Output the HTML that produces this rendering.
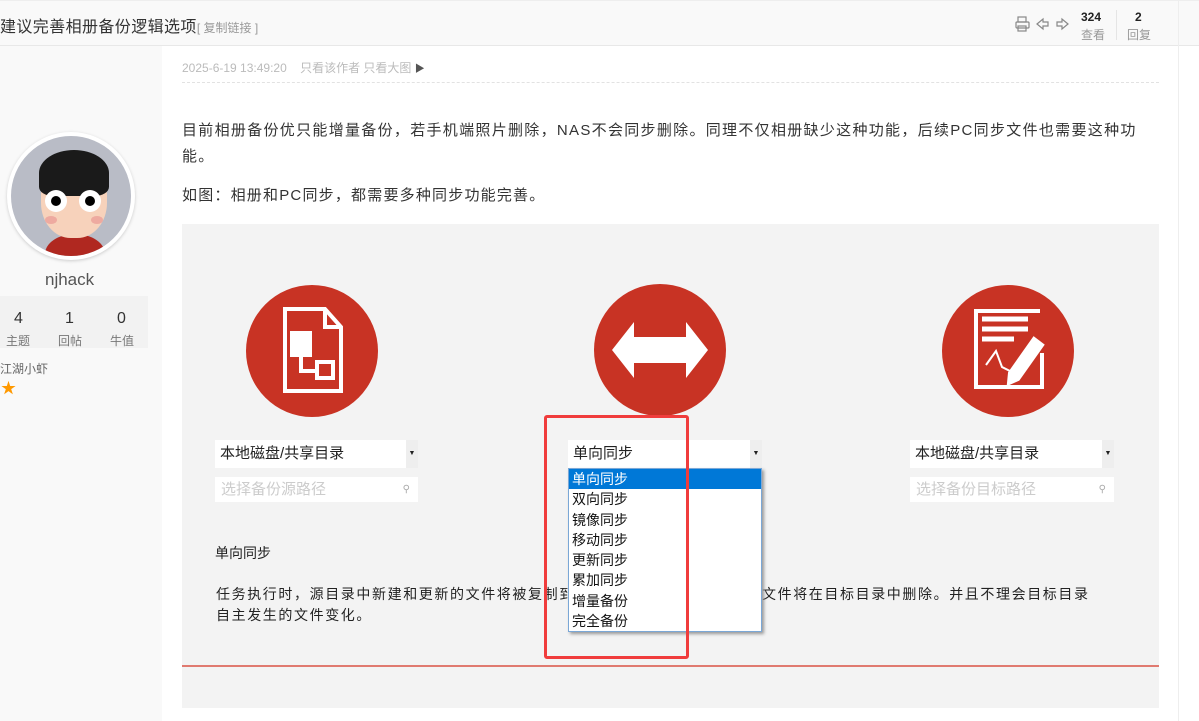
<!DOCTYPE html>
<html><head><meta charset="utf-8"><style>
*{margin:0;padding:0;box-sizing:border-box}
body{width:1199px;height:721px;overflow:hidden;background:#fff;font-family:"Liberation Sans","Noto Sans CJK SC",sans-serif;position:relative;color:#333}
.a{position:absolute;white-space:nowrap}
.sel{position:absolute;background:#fff;font-size:15px;color:#222;padding:0 5px;line-height:28px;height:28px}
.sel .ar{position:absolute;right:0;top:0;width:12px;height:28px;background:#eee;font-size:7px;text-align:center;line-height:28px}
.inp{position:absolute;background:#fff;height:25px;font-size:15px;color:#ccc;padding:0 6px;line-height:25px}
.circ{position:absolute;width:132px;height:132px;border-radius:50%;background:#c83324}
</style></head><body>
<div class="a" style="left:0;top:0;width:1199px;height:46px;background:#f9f9f9;border-bottom:1px solid #e8e8e8;border-top:1px solid #eee"></div>
<div class="a" style="left:0;top:13px;font-size:16px;color:#333;letter-spacing:0.4px">建议完善相册备份逻辑选项<span style="font-size:12px;color:#999;letter-spacing:0">[ 复制链接 ]</span></div>
<svg class="a" style="left:1015px;top:16px" width="60" height="16" viewBox="0 0 60 16" fill="none" stroke="#888" stroke-width="1.2"><rect x="3" y="1" width="8" height="5"/><rect x="1" y="6" width="13" height="6" rx="1"/><rect x="3" y="10" width="8" height="5"/><path d="M22 8l6-5v3h5v4h-5v3z"/><path d="M53 8l-6-5v3h-5v4h5v3z"/></svg>
<div class="a" style="left:1081px;top:10px;font-size:12px;font-weight:bold;color:#222">324</div>
<div class="a" style="left:1081px;top:26px;font-size:12px;color:#999">查看</div>
<div class="a" style="left:1116px;top:10px;width:1px;height:30px;background:#e5e5e5"></div>
<div class="a" style="left:1135px;top:10px;font-size:12px;font-weight:bold;color:#222">2</div>
<div class="a" style="left:1127px;top:26px;font-size:12px;color:#999">回复</div>
<div class="a" style="left:1178px;top:0;width:1px;height:721px;background:#eee"></div>
<div class="a" style="left:0;top:46px;width:162px;height:675px;background:#f9f9f9"></div>
<div class="a" style="left:7px;top:132px;width:128px;height:128px;border-radius:50%;background:#fff;box-shadow:0 1px 3px #ccc"></div>
<div class="a" style="left:11px;top:136px;width:120px;height:120px;border-radius:50%;background:#b9bcc6;overflow:hidden">
<div class="a" style="left:34px;top:98px;width:60px;height:40px;border-radius:50%;background:#b02820"></div>
<div class="a" style="left:30px;top:24px;width:66px;height:78px;border-radius:45%;background:#f7d2bb"></div>
<div class="a" style="left:28px;top:14px;width:70px;height:46px;border-radius:50% 50% 20% 20%;background:#1a1a1a"></div>
<div class="a" style="left:34px;top:54px;width:22px;height:22px;border-radius:50%;background:#fff"></div>
<div class="a" style="left:40px;top:60px;width:10px;height:10px;border-radius:50%;background:#000"></div>
<div class="a" style="left:68px;top:54px;width:22px;height:22px;border-radius:50%;background:#fff"></div>
<div class="a" style="left:74px;top:60px;width:10px;height:10px;border-radius:50%;background:#000"></div>
<div class="a" style="left:34px;top:80px;width:12px;height:8px;border-radius:50%;background:#eeaaa0"></div>
<div class="a" style="left:80px;top:80px;width:12px;height:8px;border-radius:50%;background:#eeaaa0"></div>
</div>
<div class="a" style="left:45px;top:270px;font-size:17px;color:#555">njhack</div>
<div class="a" style="left:0;top:296px;width:148px;height:52px;background:#f2f2f2"></div>
<div class="a" style="left:14px;top:310px;font-size:16px;color:#333">4</div>
<div class="a" style="left:65px;top:310px;font-size:16px;color:#333">1</div>
<div class="a" style="left:117px;top:310px;font-size:16px;color:#333">0</div>
<div class="a" style="left:6px;top:332px;font-size:12px;color:#777">主题</div>
<div class="a" style="left:58px;top:332px;font-size:12px;color:#777">回帖</div>
<div class="a" style="left:110px;top:332px;font-size:12px;color:#777">牛值</div>
<div class="a" style="left:0;top:360px;font-size:12px;color:#666">江湖小虾</div>
<div class="a" style="left:1px;top:377px;font-size:15px;color:#f90">★</div>
<div class="a" style="left:182px;top:59px;font-size:12px;color:#bbb">2025-6-19 13:49:20 &nbsp;&nbsp; 只看该作者 只看大图 <span style="color:#555;font-size:10px">▶</span></div>
<div class="a" style="left:182px;top:82px;width:977px;border-top:1px dashed #e2e2e2"></div>
<div class="a" style="left:182px;top:118px;font-size:15px;color:#333;line-height:26px;white-space:normal;width:975px;letter-spacing:1.3px">目前相册备份优只能增量备份，若手机端照片删除，NAS不会同步删除。同理不仅相册缺少这种功能，后续PC同步文件也需要这种功能。</div>
<div class="a" style="left:182px;top:184px;font-size:15px;color:#333;letter-spacing:1.2px">如图：相册和PC同步，都需要多种同步功能完善。</div>
<div class="a" style="left:182px;top:224px;width:977px;height:484px;background:#f3f3f3"></div>
<div class="a" style="left:182px;top:665px;width:977px;height:2px;background:#e07a70"></div>
<div class="circ" style="left:246px;top:285px"></div>
<svg class="a" style="left:282px;top:306px" width="62" height="88" viewBox="0 0 62 88" fill="none" stroke="#fff" stroke-width="4"><path d="M3 3h40l16 18v64H3z"/><path d="M43 3v18h16"/><rect x="10" y="27" width="18" height="22" fill="#fff"/><path d="M19 49v16h16"/><rect x="35" y="56" width="16" height="16"/></svg>
<div class="circ" style="left:594px;top:284px"></div>
<svg class="a" style="left:612px;top:322px" width="96" height="56" viewBox="0 0 96 56" fill="#fff"><path d="M0 28L22 0v15h52V0l22 28-22 28V41H22v15z"/></svg>
<div class="circ" style="left:942px;top:285px"></div>
<svg class="a" style="left:974px;top:309px" width="76" height="80" viewBox="0 0 76 80" fill="none" stroke="#fff" stroke-width="4"><path d="M66 2H2v76h66V44"/><path d="M8 10h46M8 20h46M8 30h32" stroke-width="5"/><path d="M36 64l24-34 8 6-24 34-9 4z" fill="#fff"/><path d="M12 56l10-14 6 16 12 6" stroke-width="2"/></svg>
<div class="sel" style="left:215px;top:440px;width:203px">本地磁盘/共享目录<span class="ar">▼</span></div>
<div class="inp" style="left:215px;top:477px;width:203px">选择备份源路径<span style="position:absolute;right:8px;font-size:10px;color:#aaa">⚲</span></div>
<div class="sel" style="left:568px;top:440px;width:194px">单向同步<span class="ar">▼</span></div>
<div class="sel" style="left:910px;top:440px;width:204px">本地磁盘/共享目录<span class="ar">▼</span></div>
<div class="inp" style="left:910px;top:477px;width:204px">选择备份目标路径<span style="position:absolute;right:8px;font-size:10px;color:#aaa">⚲</span></div>
<div class="a" style="left:215px;top:543px;font-size:14px;color:#222">单向同步</div>
<div class="a" style="left:216px;top:584px;font-size:14px;color:#222;line-height:21px;letter-spacing:1.6px">任务执行时，源目录中新建和更新的文件将被复制到目标目录，源目录中删除的文件将在目标目录中删除。并且不理会目标目录<br>自主发生的文件变化。</div>
<div class="a" style="left:568px;top:468px;width:194px;height:164px;background:#fff;border:1px solid #7aa7d6;box-shadow:2px 2px 3px #999;font-size:14px;line-height:20.3px;color:#111">
<div style="background:#0078d7;color:#fff;padding-left:3px">单向同步</div>
<div style="padding-left:3px">双向同步</div><div style="padding-left:3px">镜像同步</div><div style="padding-left:3px">移动同步</div><div style="padding-left:3px">更新同步</div><div style="padding-left:3px">累加同步</div><div style="padding-left:3px">增量备份</div><div style="padding-left:3px">完全备份</div></div>
<div class="a" style="left:544px;top:415px;width:145px;height:244px;border:3px solid #f03c3c;border-radius:3px"></div>
</body></html>
